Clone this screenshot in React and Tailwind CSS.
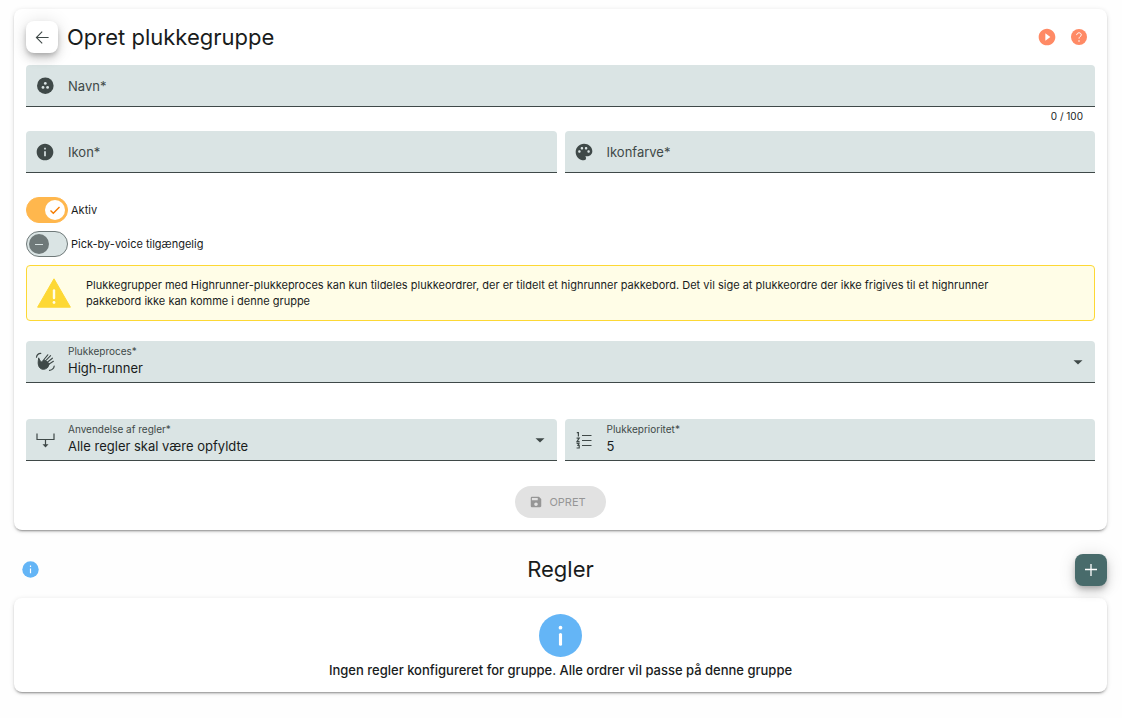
import { useState } from "react";
import { MdInfo, MdPalette, MdSave, MdPlayCircleFilled } from "react-icons/md";

const CARD =
  "rounded-lg bg-white shadow-[0_3px_1px_-2px_rgba(0,0,0,0.2),0_2px_2px_0_rgba(0,0,0,0.14),0_1px_5px_0_rgba(0,0,0,0.12)]";
const RAISED =
  "shadow-[0_3px_5px_-1px_rgba(0,0,0,0.2),0_6px_10px_0_rgba(0,0,0,0.14),0_1px_18px_0_rgba(0,0,0,0.12)]";

function ArrowLeftIcon() {
  return (
    <svg viewBox="0 0 14 14" className="size-3.5" fill="none" stroke="currentColor" strokeWidth="1.1" aria-hidden="true">
      <path d="M13.6 7.500H1.6M7.200 1.700L1.400 7.500l5.800 5.800" />
    </svg>
  );
}

function GroupIcon() {
  return (
    <svg viewBox="0 0 20 20" className="size-5" aria-hidden="true">
      <circle cx="10.3" cy="9.7" r="8.3" fill="currentColor" />
      <g fill="#dae4e4">
        <circle cx="10.3" cy="7.4" r="1.4" />
        <circle cx="8" cy="11.4" r="1.4" />
        <circle cx="12.600" cy="11.4" r="1.4" />
      </g>
    </svg>
  );
}

function WavingHandIcon() {
  return (
    <svg viewBox="0 0 20 20" className="size-5" fill="none" stroke="currentColor" strokeLinecap="round" aria-hidden="true">
      <path d="M1.500 5.200C1.800 2.800 3.500 1.500 5.800 1.400M14.500 18.300C17.200 18 18.900 16.600 19.200 14" strokeWidth="1.2" />
      <path d="M3.700 6.300L5.600 9.500C6.200 10.200 6.800 9.700 7.400 9.200L9.500 8L14.300 11.700L12.800 15.300C10 18 6.600 17.900 4.500 15.500C2.700 13.300 3 9.300 3.700 6.300Z" fill="currentColor" strokeWidth="1" strokeLinejoin="round" />
      <path d="M8.200 8.500L12.800 2.800M10 9.300L15.600 3.700M11.700 10.800L17.400 6.200M13 12.800L18.400 9.300" strokeWidth="1.1" />
    </svg>
  );
}

function MergeIcon() {
  return (
    <svg viewBox="0 0 20 20" className="size-5" fill="none" stroke="currentColor" strokeWidth="1.2" aria-hidden="true">
      <path d="M2 3.500V9.500H19V3.500M10.500 9.500V16" />
      <path d="M7.500 14.200H13.500L10.500 17.400Z" fill="currentColor" stroke="none" />
    </svg>
  );
}

function NumberedListIcon() {
  return (
    <svg viewBox="0 0 20 20" className="size-5" fill="none" stroke="currentColor" strokeWidth="1.2" aria-hidden="true">
      <path d="M8 5.500H17.500M8 10.500H17.500M8 15.500H17.500" />
      <path d="M2.800 2.700H4.400V6.500M2.600 8.200H5.200L3 11.600H5.600M2.600 13.400H5L4 15.300H5.200V18H2.600" />
    </svg>
  );
}

function InfoCircle({ className }) {
  return (
    <svg viewBox="0 0 44 44" className={className} aria-hidden="true">
      <circle cx="22" cy="22" r="22" fill="#64b5f6" />
      <circle cx="22" cy="14" r="1.9" fill="#fff" />
      <path d="M22 21V31" stroke="#fff" strokeWidth="3.2" strokeLinecap="round" />
    </svg>
  );
}

function SmallInfoCircle() {
  return (
    <svg viewBox="0 0 17 17" className="size-[17px]" aria-hidden="true">
      <circle cx="8.5" cy="8.5" r="8.2" fill="#64b5f6" />
      <path d="M8.500 4.600V6M8.500 7.400V12.200" stroke="#fff" strokeWidth="1.2" />
    </svg>
  );
}

function HelpIcon() {
  return (
    <svg viewBox="0 0 16 16" className="size-4" aria-hidden="true">
      <circle cx="8" cy="8" r="8" fill="#ff8a65" />
      <path d="M5.700 6.100C5.700 4.700 6.700 3.800 8 3.800s2.300.9 2.300 2.100C10.300 7.400 8 7.600 8 9.600" fill="none" stroke="#fff" strokeWidth="1" />
      <circle cx="8" cy="12" r=".8" fill="#fff" />
    </svg>
  );
}

function WarningIcon() {
  return (
    <svg viewBox="0 0 34 30" className="h-[30px] w-[34px] shrink-0" aria-hidden="true">
      <path d="M17 .8L33.400 29.200H.6Z" fill="#fdd835" stroke="#fdd835" strokeWidth="1" strokeLinejoin="round" />
      <path d="M17 12.500V20" stroke="#fffde7" strokeWidth="2.400" strokeLinecap="round" />
      <circle cx="17" cy="24.500" r="1.400" fill="#fffde7" />
    </svg>
  );
}

function FieldShell({ icon, children }) {
  return (
    <div className="flex h-[42px] min-w-0 items-center gap-[13px] rounded-t border-b border-[#3f4948] bg-[#dae4e4] pl-[9px] text-[#3f4948]">
      <span className="flex size-5 shrink-0 items-center justify-center">{icon}</span>
      <div className="grid h-full min-w-0 grow grid-cols-1">{children}</div>
    </div>
  );
}

function TextField({ id, label, icon, value, onChange, maxLength }) {
  return (
    <FieldShell icon={icon}>
      <input
        id={id}
        value={value}
        maxLength={maxLength}
        placeholder=" "
        onChange={(e) => onChange(e.target.value)}
        className="peer col-start-1 row-start-1 w-full bg-transparent pt-[15px] pr-3 text-[13px] text-[#191c1c] outline-none"
      />
      <label
        htmlFor={id}
        className="pointer-events-none col-start-1 row-start-1 self-start pt-[3px] text-[10px] leading-[14px] peer-placeholder-shown:self-center peer-placeholder-shown:pt-0 peer-placeholder-shown:text-[13px] peer-placeholder-shown:leading-4"
      >
        {label}*
      </label>
    </FieldShell>
  );
}

function SelectField({ id, label, icon, options }) {
  return (
    <FieldShell icon={icon}>
      <select
        id={id}
        className="col-start-1 row-start-1 w-full appearance-none bg-transparent pt-[15px] pr-8 text-[13px] text-[#191c1c] outline-none"
      >
        {options.map((o) => (
          <option key={o}>{o}</option>
        ))}
      </select>
      <label htmlFor={id} className="pointer-events-none col-start-1 row-start-1 self-start pt-[3px] text-[10px] leading-[14px]">
        {label}*
      </label>
      <svg viewBox="0 0 10 6" className="pointer-events-none col-start-1 row-start-1 mr-3 h-1.5 w-2.5 self-center justify-self-end" aria-hidden="true">
        <path d="M.5 1.300H9.500L5 5.600Z" fill="currentColor" />
      </svg>
    </FieldShell>
  );
}

function Switch({ label, defaultChecked }) {
  const [on, setOn] = useState(defaultChecked);
  return (
    <label className="flex h-[26px] w-fit cursor-pointer items-center gap-[3px]">
      <span className="grid">
        <input
          type="checkbox"
          role="switch"
          checked={on}
          onChange={(e) => setOn(e.target.checked)}
          className="col-start-1 row-start-1 h-[26px] w-[42px] appearance-none rounded-full border border-[#6f7979] bg-[#dae4e4] checked:border-[#ffb74d] checked:bg-[#ffb74d]"
        />
        {on ? (
          <span className="pointer-events-none col-start-1 row-start-1 mr-[3px] flex size-5 items-center justify-center self-center justify-self-end rounded-full bg-white">
            <svg viewBox="0 0 12 12" className="size-3" fill="none" stroke="#f57c00" strokeWidth="1.4" aria-hidden="true">
              <path d="M1.500 6.500L4.300 9.200L10.500 3" />
            </svg>
          </span>
        ) : (
          <span className="pointer-events-none col-start-1 row-start-1 ml-[3px] flex size-5 items-center justify-center self-center rounded-full bg-[#6f7979]">
            <span className="h-px w-2 bg-[#dae4e4]" />
          </span>
        )}
      </span>
      <span className="text-[11px] leading-4">{label}</span>
    </label>
  );
}

export default function App() {
  const [name, setName] = useState("");
  const [icon, setIcon] = useState("");
  const [color, setColor] = useState("");
  const [priority, setPriority] = useState("5");
  return (
    <main className="min-h-screen bg-[#fefefe] pt-[9px] pr-[15px] pb-6 pl-3.5 font-['Inter',sans-serif] text-[#191c1c]">
      <form className={`${CARD} p-3`} onSubmit={(e) => e.preventDefault()}>
        <header className="mb-3 flex h-8 items-center">
          <button type="button" aria-label="Tilbage" className={`flex size-8 items-center justify-center rounded-lg bg-white text-[#3f4948] ${RAISED}`}>
            <ArrowLeftIcon />
          </button>
          <h1 className="ml-[9px] grow text-[22px] leading-7">Opret plukkegruppe</h1>
          <div className="flex items-center gap-3.5 pr-[7px]">
            <button type="button" aria-label="Afspil" className="text-[#ff8a65]">
              <MdPlayCircleFilled className="size-5" />
            </button>
            <button type="button" aria-label="Hjælp" className="pr-px">
              <HelpIcon />
            </button>
          </div>
        </header>

        <TextField id="navn" label="Navn" icon={<GroupIcon />} value={name} onChange={setName} maxLength={100} />
        <p className="h-6 pt-0.5 pr-3 text-right text-[10px] leading-[14px]">{name.length} / 100</p>

        <div className="grid grid-cols-2 gap-2">
          <TextField id="ikon" label="Ikon" icon={<MdInfo className="size-5" />} value={icon} onChange={setIcon} />
          <TextField id="ikonfarve" label="Ikonfarve" icon={<MdPalette className="size-5" />} value={color} onChange={setColor} />
        </div>

        <div className="mt-6 mb-2 flex flex-col gap-2">
          <Switch label="Aktiv" defaultChecked={true} />
          <Switch label="Pick-by-voice tilgængelig" defaultChecked={false} />
        </div>

        <div role="note" className="flex items-center gap-[15px] rounded border border-[#fdd835] bg-[#fffde7] py-[11px] pr-14 pl-2.5">
          <WarningIcon />
          <p className="text-[11px] leading-4">
            Plukkegrupper med Highrunner-plukkeproces kan kun tildeles plukkeordrer, der er tildelt et highrunner pakkebord. Det vil sige at
            plukkeordre der ikke frigives til et highrunner pakkebord ikke kan komme i denne gruppe
          </p>
        </div>

        <div className="mt-5 mb-9">
          <SelectField id="proces" label="Plukkeproces" icon={<WavingHandIcon />} options={["High-runner"]} />
        </div>

        <div className="grid grid-cols-2 gap-2">
          <SelectField id="regler" label="Anvendelse af regler" icon={<MergeIcon />} options={["Alle regler skal være opfyldte"]} />
          <TextField id="prioritet" label="Plukkeprioritet" icon={<NumberedListIcon />} value={priority} onChange={setPriority} />
        </div>

        <div className="mt-[25px] flex justify-center">
          <button type="submit" disabled className="flex h-8 items-center gap-1.5 rounded-full bg-[#e2e2e2] pr-5 pl-3.5 text-[11px] text-[#969696]">
            <MdSave className="size-3.5" />
            OPRET
          </button>
        </div>
      </form>

      <section>
        <header className="mt-6 mb-3 grid grid-cols-3">
          <button type="button" aria-label="Information" className="mt-[7px] ml-2 h-fit w-fit">
            <SmallInfoCircle />
          </button>
          <h2 className="mt-px text-center text-[22px] leading-7">Regler</h2>
          <button type="button" aria-label="Tilføj regel" className={`flex size-8 items-center justify-center justify-self-end rounded-lg bg-[#486b6b] text-white ${RAISED}`}>
            <svg viewBox="0 0 12 12" className="size-3" stroke="currentColor" strokeWidth="1.3" aria-hidden="true">
              <path d="M0 5.500H12M6 0V12" />
            </svg>
          </button>
        </header>
        <div className={`${CARD} flex flex-col items-center px-4 pt-4 pb-3`}>
          <InfoCircle className="size-[43px]" />
          <p className="mt-[3px] text-center text-[13px] leading-5 font-medium">
            Ingen regler konfigureret for gruppe. Alle ordrer vil passe på denne gruppe
          </p>
        </div>
      </section>
    </main>
  );
}
